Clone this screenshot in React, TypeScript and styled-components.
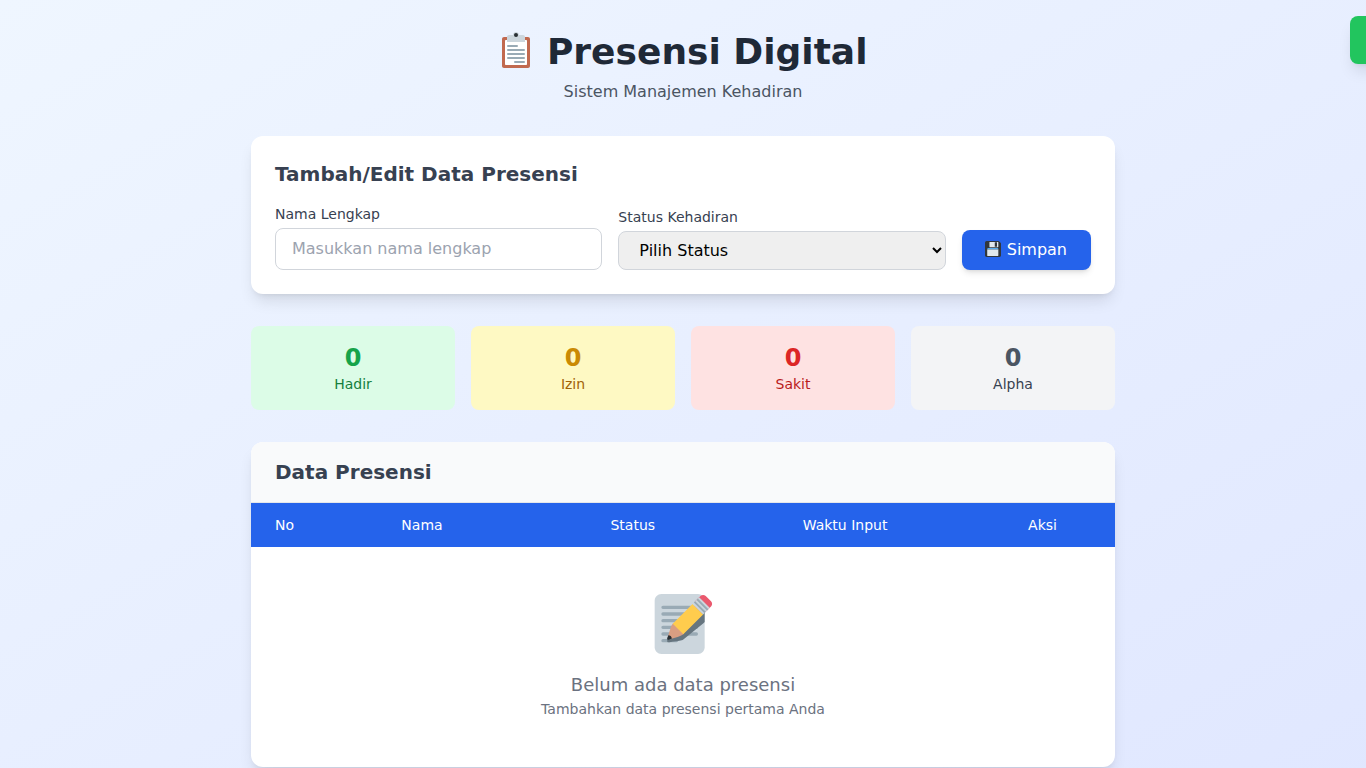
import React, { useState } from 'react';
import styled, { createGlobalStyle, css } from 'styled-components';

const GlobalStyle = createGlobalStyle`
  *, *::before, *::after { box-sizing: border-box; }
  html { line-height: 1.5; }
  body { margin: 0; overflow: hidden; font-family: 'DejaVu Sans', sans-serif; }
  h1, h2, p { margin: 0; }
  svg { display: block; }
`;

const shadowLarge = css`
  box-shadow: 0 10px 15px -3px rgba(0, 0, 0, 0.1), 0 4px 6px -4px rgba(0, 0, 0, 0.1);
`;

const Page = styled.div`
  min-height: 100vh;
  background: linear-gradient(to bottom right, #eff6ff, #e0e7ff);
`;

const Container = styled.main`
  max-width: 896px;
  margin: 0 auto;
  padding: 32px 16px;
`;

const Header = styled.header`
  margin-bottom: 32px;
  text-align: center;
`;

const Title = styled.h1`
  display: flex;
  justify-content: center;
  margin-bottom: 8px;
  color: #1f2937;
  font-size: 36px;
  font-weight: 700;
  line-height: 40px;
`;

const TitleIcon = styled.span`
  width: 36px;
  margin: 0 13px 0 -0.5px;
`;

const Subtitle = styled.p`
  color: #4b5563;
  font-size: 16px;
  line-height: 24px;
`;

const Card = styled.section<{ $padded?: boolean }>`
  margin-bottom: ${(p) => (p.$padded ? '32px' : 0)};
  padding: ${(p) => (p.$padded ? '24px' : 0)};
  overflow: hidden;
  border-radius: 12px;
  background: #fff;
  ${shadowLarge}
`;

const SectionTitle = styled.h2`
  color: #374151;
  font-size: 20px;
  font-weight: 600;
  line-height: 28px;
`;

const Form = styled.form`
  display: flex;
  align-items: flex-end;
  gap: 16px;
  margin-top: 16px;
`;

const Field = styled.div`
  flex: 1;
  min-width: 0;
`;

const Label = styled.label`
  display: block;
  margin-bottom: 4px;
  color: #374151;
  font-size: 14px;
  line-height: 20px;
`;

const control = css`
  display: block;
  width: 100%;
  margin: 0;
  padding: 8px 16px;
  border: 1px solid #d1d5db;
  border-radius: 8px;
  font-family: inherit;
  font-size: 16px;
`;

const Input = styled.input`
  ${control}
  height: 42px;
  padding: 7px 16px 9px;
  line-height: 24px;
  &::placeholder { color: #9ca3af; opacity: 1; }
`;

const Select = styled.select`
  ${control}
  height: 39px;
  color: #000;
  background-color: #efefef;
`;

const SaveButton = styled.button`
  display: flex;
  align-items: center;
  gap: 5px;
  height: 40px;
  padding: 0 24px 0 22px;
  border: 0;
  border-radius: 8px;
  color: #fff;
  background: #2563eb;
  box-shadow: 0 4px 6px -1px rgba(0, 0, 0, 0.1), 0 2px 4px -2px rgba(0, 0, 0, 0.1);
  font-family: inherit;
  font-size: 16px;
  font-weight: 500;
  line-height: 24px;

  svg { margin-bottom: 2px; }
`;

const Stats = styled.div`
  display: grid;
  grid-template-columns: repeat(4, 1fr);
  gap: 16px;
  margin-bottom: 32px;
`;

const StatCard = styled.div<{ $bg: string }>`
  padding: 16px;
  border-radius: 8px;
  background: ${(p) => p.$bg};
  text-align: center;
`;

const StatValue = styled.div<{ $color: string }>`
  color: ${(p) => p.$color};
  font-size: 24px;
  font-weight: 700;
  line-height: 32px;
`;

const StatLabel = styled.div<{ $color: string }>`
  color: ${(p) => p.$color};
  font-size: 14px;
  line-height: 20px;
`;

const TableHeader = styled.div`
  padding: 16px 24px;
  border-bottom: 1px solid #e5e7eb;
  background: #f9fafb;
`;

const Table = styled.table`
  width: 100%;
  border-collapse: collapse;
`;

const HeadCell = styled.th<{ $align: 'left' | 'center' }>`
  padding: 12px 24px;
  color: #fff;
  background: #2563eb;
  font-size: 14px;
  font-weight: 500;
  line-height: 20px;
  text-align: ${(p) => p.$align};
`;

const EmptyState = styled.div`
  display: flex;
  flex-direction: column;
  align-items: center;
  padding: 47px 0 48px;
  color: #6b7280;
`;

const EmptyIcon = styled.div`
  height: 60px;
  margin-bottom: 17px;
`;

const EmptyTitle = styled.p`
  font-size: 18px;
  line-height: 28px;
`;

const EmptyText = styled.p`
  font-size: 14px;
  line-height: 20px;
`;

const Toast = styled.div`
  position: fixed;
  top: 16px;
  right: 16px;
  width: 200px;
  height: 48px;
  border-radius: 8px;
  background: #22c55e;
  transform: translateX(100%);
  ${shadowLarge}
`;

const ClipboardIcon = () => (
  <svg width="36" height="36" viewBox="0 0 36 36" aria-hidden="true">
    <path fill="#C1694F" d="M32 34c0 1.1-.9 2-2 2H6c-1.1 0-2-.9-2-2V7c0-1.1.9-2 2-2h24c1.1 0 2 .9 2 2v27z" />
    <path fill="#FFF" d="M29 32c0 .55-.45 1-1 1H8c-.55 0-1-.45-1-1V9c0-.55.45-1 1-1h20c.55 0 1 .45 1 1v23z" />
    <path fill="#CCD6DD" d="M25 3h-4c0-1.66-1.34-3-3-3s-3 1.34-3 3h-4c-1.1 0-2 .9-2 2v5h18V5c0-1.1-.9-2-2-2z" />
    <circle fill="#292F33" cx="18" cy="3" r="2" />
    <path stroke="#99AAB5" strokeWidth="2" strokeLinecap="round" d="M10 14h9M10 18h16M10 22h16M10 26h16M17 30h9" />
  </svg>
);

const FloppyIcon = () => (
  <svg width="18" height="16" viewBox="-2 0 40 36" aria-hidden="true">
    <path fill="#31373D" d="M4 36s-4 0-4-4V4s0-4 4-4h26c1 0 2 1 2 1l3 3s1 1 1 2v26s0 4-4 4H4z" />
    <path fill="#55ACEE" d="M5 19v-1s0-2 2-2h21c2 0 2 2 2 2v1H5z" />
    <path fill="#E1E8ED" d="M5 32.021V19h25v13s0 2-2 2H7c-2 0-2-1.979-2-1.979zM10 3s0-1 1-1h18c1.048 0 1 1 1 1v10s0 1-1 1H11s-1 0-1-1V3zm12 10h5V3h-5v10z" />
  </svg>
);

const MemoIcon = () => (
  <svg width="60" height="60" viewBox="0 0 36 36" aria-hidden="true">
    <path fill="#CCD6DD" d="M31 32c0 2.209-1.791 4-4 4H5c-2.209 0-4-1.791-4-4V4c0-2.209 1.791-4 4-4h22c2.209 0 4 1.791 4 4v28z" />
    <path stroke="#99AAB5" strokeWidth="2" strokeLinecap="round" d="M6 8h20M6 12h20M6 16h20M6 20h20M6 24h20M6 28h8" />
    <path fill="#66757F" d="M31 6.272c-.827-.535-1.837-.579-2.521-.023l-.792.646-1.484 1.211-.1.08-2.376 1.938-11.878 9.686c-.437.357-.793 1.219-1.173 2.074-.378.85-.969 2.852-1.443 4.391-.148.25-1.065 1.846-.551 2.453.52.615 2.326.01 2.568-.076 1.626-.174 3.731-.373 4.648-.58.924-.211 1.854-.395 2.291-.752.008-.006.01-.018.017-.023l11.858-9.666.792-.646.144-.118V6.272z" />
    <path fill="#D99E82" d="M18.145 22.526s-1.274-1.881-2.117-2.553c-.672-.843-2.549-2.116-2.549-2.116-.448-.446-1.191-.48-1.629-.043-.437.438-.793 1.366-1.173 2.291-.472 1.146-1.276 4.154-1.768 5.752-.083.272.517-.45.503-.21-.01.187.027.394.074.581l-.146.159.208.067c.025.082.05.154.068.21l.159-.146c.187.047.394.084.58.074.24-.014-.483.587-.21.503 1.598-.493 4.607-1.296 5.752-1.768.924-.381 1.854-.736 2.291-1.174.439-.435.406-1.178-.043-1.627z" />
    <path fill="#EA596E" d="M25.312 4.351c-.876.875-.876 2.293 0 3.168l3.167 3.168c.876.874 2.294.874 3.168 0l3.169-3.168c.874-.875.874-2.293 0-3.168l-3.169-3.168c-.874-.875-2.292-.875-3.168 0l-3.167 3.168z" />
    <path fill="#FFCC4D" d="M11.849 17.815l3.17 3.17 3.165 3.166 11.881-11.879-6.337-6.336-11.879 11.879z" />
    <path fill="#292F33" d="M11.298 26.742s-2.06 1.133-2.616.576c-.557-.558.581-2.611.581-2.611s1.951.036 2.035 2.035z" />
    <path fill="#CCD6DD" d="M23.728 5.935l3.96-3.96 6.336 6.337-3.96 3.96z" />
    <path fill="#99AAB5" d="M26.103 3.558l.792-.792 6.336 6.335-.792.792zM24.52 5.142l.791-.791 6.336 6.335-.792.792z" />
  </svg>
);

const stats = [
  { label: 'Hadir', bg: '#dcfce7', value: '#16a34a', text: '#15803d' },
  { label: 'Izin', bg: '#fef9c3', value: '#ca8a04', text: '#a16207' },
  { label: 'Sakit', bg: '#fee2e2', value: '#dc2626', text: '#b91c1c' },
  { label: 'Alpha', bg: '#f3f4f6', value: '#4b5563', text: '#374151' },
];

const columns: { label: string; align: 'left' | 'center' }[] = [
  { label: 'No', align: 'left' },
  { label: 'Nama', align: 'left' },
  { label: 'Status', align: 'center' },
  { label: 'Waktu Input', align: 'center' },
  { label: 'Aksi', align: 'center' },
];

export default function App() {
  const [name, setName] = useState('');
  const [status, setStatus] = useState('');

  return (
    <Page>
      <GlobalStyle />
      <Container>
        <Header>
          <Title>
            <TitleIcon><ClipboardIcon /></TitleIcon>
            Presensi Digital
          </Title>
          <Subtitle>Sistem Manajemen Kehadiran</Subtitle>
        </Header>

        <Card $padded>
          <SectionTitle>Tambah/Edit Data Presensi</SectionTitle>
          <Form onSubmit={(e) => e.preventDefault()}>
            <Field>
              <Label htmlFor="nama">Nama Lengkap</Label>
              <Input
                id="nama"
                placeholder="Masukkan nama lengkap"
                value={name}
                onChange={(e) => setName(e.target.value)}
              />
            </Field>
            <Field>
              <Label htmlFor="status">Status Kehadiran</Label>
              <Select id="status" value={status} onChange={(e) => setStatus(e.target.value)}>
                <option value="">Pilih Status</option>
                {stats.map((s) => (
                  <option key={s.label} value={s.label}>{s.label}</option>
                ))}
              </Select>
            </Field>
            <SaveButton type="submit">
              <FloppyIcon />
              Simpan
            </SaveButton>
          </Form>
        </Card>

        <Stats>
          {stats.map((s) => (
            <StatCard key={s.label} $bg={s.bg}>
              <StatValue $color={s.value}>0</StatValue>
              <StatLabel $color={s.text}>{s.label}</StatLabel>
            </StatCard>
          ))}
        </Stats>

        <Card>
          <TableHeader>
            <SectionTitle>Data Presensi</SectionTitle>
          </TableHeader>
          <Table>
            <thead>
              <tr>
                {columns.map((c) => (
                  <HeadCell key={c.label} $align={c.align}>{c.label}</HeadCell>
                ))}
              </tr>
            </thead>
          </Table>
          <EmptyState>
            <EmptyIcon><MemoIcon /></EmptyIcon>
            <EmptyTitle>Belum ada data presensi</EmptyTitle>
            <EmptyText>Tambahkan data presensi pertama Anda</EmptyText>
          </EmptyState>
        </Card>
      </Container>
      <Toast role="status" />
    </Page>
  );
}
